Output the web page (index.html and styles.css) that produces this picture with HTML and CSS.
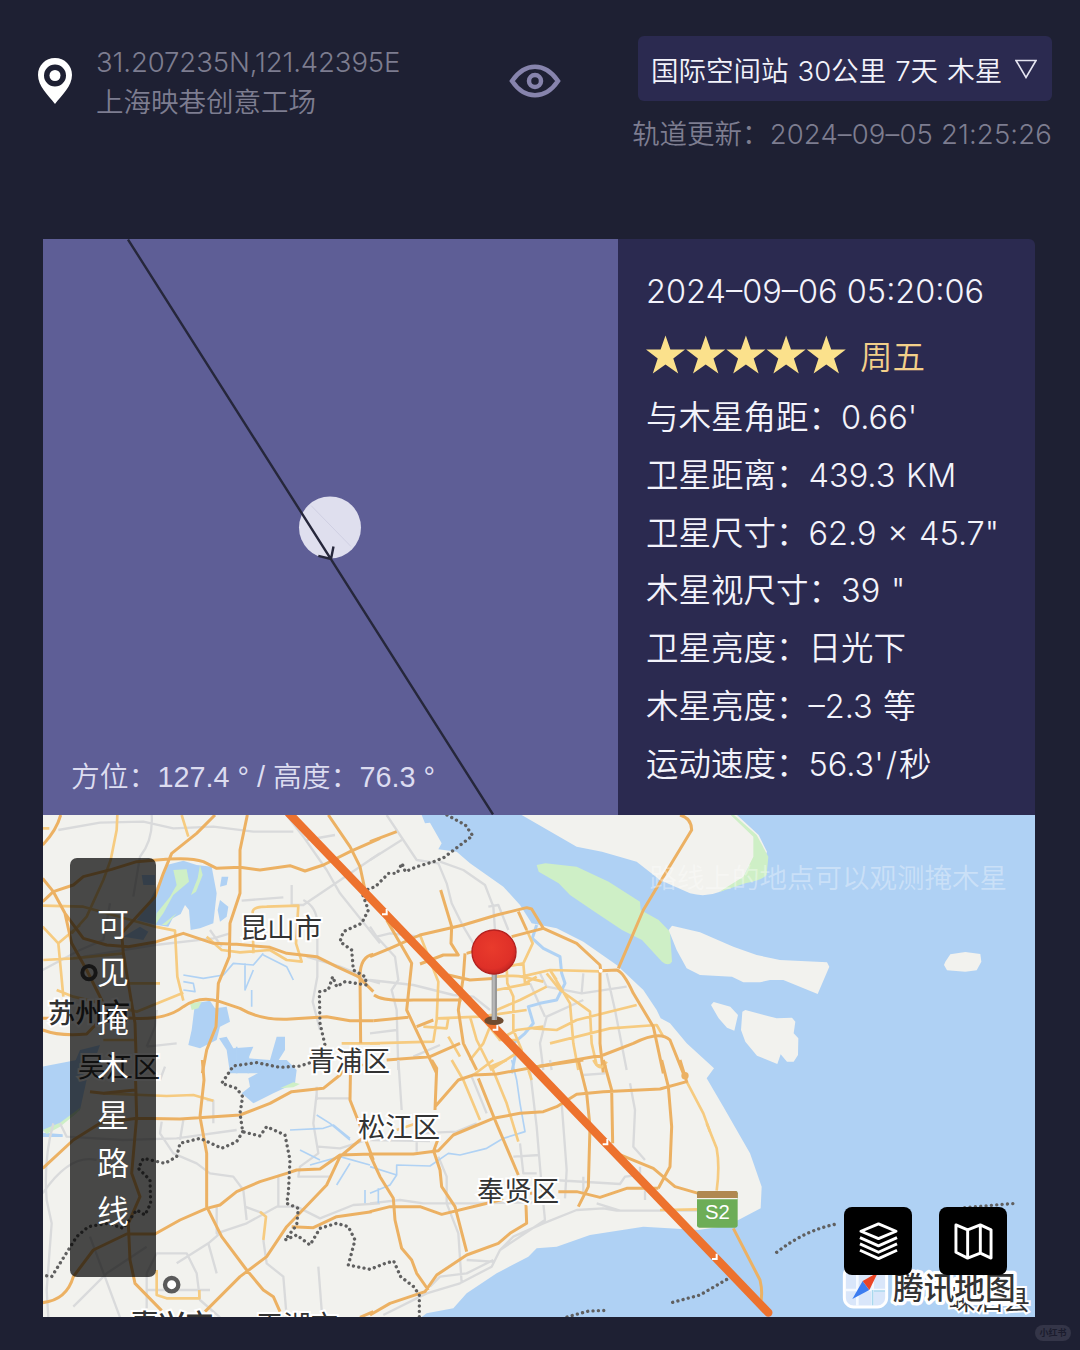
FILE: index.html
```html
<!DOCTYPE html>
<html lang="zh-CN">
  <head>
    <meta charset="UTF-8" />
    <meta name="viewport" content="width=device-width, initial-scale=1.0" />
    <title>掩木星预报</title>
    <link rel="stylesheet" href="styles.css" />
  </head>
  <body>
    <header class="header">
      <div class="location">
        <svg class="pin-icon" viewBox="0 0 36 48">
          <path fill-rule="evenodd" d="M18 1C8.400 1 1 8.500 1 18c0 11 10 20 17 29 7-9 17-18 17-29C35 8.500 27.600 1 18 1zm0 6.500a11 11 0 1 1 0 22 11 11 0 0 1 0-22z" />
          <circle cx="18" cy="18.500" r="5.500" />
        </svg>
        <div class="location-text">
          <div class="coords">31.207235N,121.42395E</div>
          <div class="place">上海映巷创意工场</div>
        </div>
      </div>
      <svg class="eye-icon" viewBox="0 0 52 38">
        <path d="M3 19C16 0 36 0 49 19 36 38 16 38 3 19z" />
        <circle cx="26" cy="19" r="6" />
      </svg>
      <div class="filter">
        <div class="filter-button">国际空间站 30公里 7天 木星 <svg viewBox="0 0 22 20"><path d="M1 1.500h20L11 18.500z" /></svg></div>
        <div class="updated">轨道更新：<span>2024–09–05 21:25:26</span></div>
      </div>
    </header>

    <main class="card">
      <section class="plot">
        <svg viewBox="0 0 575 575">
          <circle cx="287" cy="288" r="31" fill="#dfdfee" />
          <path d="M268 266L308 307" stroke="#cfcfe2" stroke-width="1" />
          <path class="transit" d="M85 0L450 575M275.300 316.300L288 319.500L290.500 307" />
        </svg>
        <div class="direction">方位：<span class="num">127.4 ° / </span>高度：<span class="num">76.3 °</span></div>
      </section>

      <section class="details">
        <div class="time">2024–09–06 05:20:06</div>
        <div class="rating">
          <svg viewBox="0 0 201 40">
            <defs>
              <path id="star" d="M19.500 0.500L24.400 14.600H39L27.300 23.600L32.200 38.500L19.500 29.500L6.800 38.500L11.700 23.600L0 14.600H14.600z" />
            </defs>
            <use href="#star" />
            <use href="#star" x="40.200" />
            <use href="#star" x="80.400" />
            <use href="#star" x="120.600" />
            <use href="#star" x="160.800" />
          </svg>
          <span>周五</span>
        </div>
        <div class="row">与木星角距：<span>0.66'</span></div>
        <div class="row">卫星距离：<span>439.3 KM</span></div>
        <div class="row">卫星尺寸：<span>62.9 × 45.7"</span></div>
        <div class="row">木星视尺寸：<span>39 "</span></div>
        <div class="row">卫星亮度：<span>日光下</span></div>
        <div class="row">木星亮度：<span>–2.3 等</span></div>
        <div class="row">运动速度：<span>56.3'<span class="slash">/</span>秒</span></div>
      </section>

      <section class="map">
        <svg class="map-canvas" viewBox="0 0 2979 1506" preserveAspectRatio="none">
          <!-- sea -->
          <path class="water" d="M1139 0L1149 25L1164 23L1199 85L1189 103L1244 110L1284 145L1384 215L1434 270L1469 325L1544 340L1624 380L1724 450L1804 525L1844 585L1856 610L1884 625L1934 685L2016 760L1994 790L2044 875L2124 1015L2159 1115L2156 1180L2089 1215L2034 1235L1969 1245L1804 1235L1644 1260L1544 1295L1484 1300L1459 1325L1364 1375L1274 1435L1234 1480L1154 1495L1139 1506H2979V0z" />
          <!-- islands -->
          <path class="land" d="M1439 0L1604 95L1680 110L1784 140L1854 195L1944 235Q1990 248 2034 230L2104 200L2160 150L2175 110L2150 60L2085 0z" />
          <path class="park" d="M2076 0L2144 60L2179 125L2174 180Q2160 195 2110 205L2030 232L2104 185L2134 125V65L2066 0z" />
          <path class="park" d="M1484 150L1510 145L1604 155L1700 200L1794 260L1796 285L1850 315L1884 350L1890 440Q1880 455 1860 440L1800 375L1740 345L1650 285L1584 240L1550 205L1490 170z" />
          <path class="land" d="M1880 345L1890 332L1974 352L2074 395L2144 420L2214 435L2355 442L2362 455L2327 537L2224 495H2184L2154 502H2104L2070 485L1974 480L1934 460L1904 405z" />
          <path class="land" d="M2007 570L2015 561L2065 575L2088 600L2077 647L2055 638L2030 610zM2110 585L2204 610L2250 608L2260 620L2255 655L2269 670L2268 720L2255 740L2235 740L2216 718L2206 747L2145 722L2110 680L2097 645L2101 590zM2710 440L2725 418L2770 411L2815 417L2818 440L2804 466L2770 470L2715 466L2706 450z" />

          <g transform="translate(-6 -15)">
            <path class="water" d="M380 165L430 152L470 165L515 170L530 250L520 340L480 355L452 360L447 300L435 285L422 312L398 325L385 350L350 345L290 330L320 290L350 230zM540 270L565 290L560 320L540 335L533 300zM545 200h20l-5 25l-20 5zM305 195h40v30h-35zM250 380L300 350L325 365L310 390zM465 580L510 572L525 595L560 590L570 635L540 650L530 690L480 715L445 705L455 660zM537 685L560 680L580 715L640 710L625 745L690 750L710 680L735 680L735 720L710 760L700 790H570L560 720zM120 720L180 705L150 790H90z" />
            <path class="park" d="M400 180L440 178L447 215L400 255L370 310L345 345L350 310L390 260L410 225zM480 165l8 30l-20 50l-15 10l20-50zM365 345l45-35l-30 35zM450 580l35-5l-10 20l-20 5z" />
            <path class="minor" d="M55 60L180 38L310 35L400 55L520 50L640 65H760M335 15Q340 90 300 140L280 260M740 15L790 80L860 180L900 250L1020 400M605 272L730 262M755 225V285H790L1020 130M790 270Q830 290 832 340V500L818 575L840 660M130 440L345 405L520 385L570 370M510 360L545 410M320 710L410 700M800 440L900 470L950 490M800 90L885 75M350 600L345 650L320 710M8 480L120 420L190 390L210 280M1020 520L950 500" />
            <path class="river" d="M430 495L490 505L550 495L580 460L640 465L670 430M430 515L460 520L465 545L430 540M615 460V540L640 480M670 435L740 470L760 510M635 540V590M590 710V790M625 730V790" />
            <path class="main" d="M232 15L230 60L212 150L190 210L140 320L95 370M425 15L445 80M8 287L130 290L345 350L405 362L412 500L430 572M8 350L55 400L70 560M55 400L120 345M10 450L100 445L250 430M640 430L638 305Q640 290 680 290L775 287L768 400L785 455L740 450L690 420L600 427L545 420L500 380M430 548L290 605L100 560L50 540M265 520H360M905 700H1020M8 55h20M190 690H290" />
            <path class="highway" d="M8 105Q50 60 62 15M8 275L40 245L100 225L130 200L215 178L290 155L350 150Q450 140 490 155L530 175L600 172L660 180L750 167L795 183L850 165L930 125L1020 85M8 205L40 245L75 310L130 385L200 405L265 410L350 395L430 370L520 400L590 403L690 412L740 430L830 440L890 470L955 500L985 530L1000 545M525 15L470 70L395 130L370 190L345 260L290 320L245 370L250 430L265 520L285 640L290 790M622 15L600 120V250L570 340L568 440L535 520L528 650L500 720L487 790M865 15L930 110L960 170L975 240M280 625Q380 630 430 590Q480 555 540 575L600 595Q660 630 740 628L860 620L930 632H1000M1000 433Q960 440 960 500L962 700M8 660Q60 680 140 672L190 620L280 625M8 625h50M75 310L95 400L140 480L200 600" />
          </g>

          <g transform="translate(-6 735)">
            <path class="water" d="M8 20L110 0L140 60L120 150L60 195L8 215zM8 218l60 5v8H8zM625 55L680 25L690 0H740L770 30L765 70L700 100L640 130L605 100L630 80z" />
            <path class="park" d="M8 210L60 188L125 140L110 160L60 200L20 222zM720 85l40-18l20 5l-20 10z" />
            <path class="minor" d="M40 190Q10 300 20 420L35 490L20 690L25 772M60 190L80 230L250 240L410 235L590 210M365 185L360 220L400 280L470 310L510 340L580 350L610 390L620 480M430 180L420 240M530 440V520L620 490L710 440H770L840 475L940 435L1020 430M615 440L670 460M830 100L820 190L835 280L780 320L775 350H870M830 115H930M830 80V120M715 350V440M670 540L680 610L730 650L740 772M835 620L845 750M320 640L350 580H440L470 640L480 720L540 772M100 740L200 640L320 560M410 610L505 550L540 520M505 550L530 640M150 530L240 772M8 400Q90 280 170 300M320 690H510M320 640V772M375 20L360 60M500 120L520 122V190M835 260L900 265L980 240" />
            <path class="river" d="M750 210L850 205L880 195L930 235M830 165L870 190L930 240M810 315L900 290L990 315M930 310L890 375M975 390V430M780 270L840 300" />
            <path class="main" d="M190 100L380 108L460 105L520 122M660 455L678 470L670 540M350 630V705L380 715H478V690M1000 15H960" />
            <path class="highway" d="M487 0L492 60L480 170L500 280V440L545 530L620 630L670 690L700 710L720 755M285 0L290 170L275 340L300 410L265 490L270 600L285 670L365 752M8 325L100 240L180 190L290 175L420 177L600 165L690 130L755 95L850 85L900 45L915 20M150 95L190 100L285 90M8 728Q80 720 100 650L160 570L260 522H345L420 480L500 445L540 435L590 395L660 365L740 340L770 330L840 327L900 285L995 282M495 755L600 650L680 590L740 500L860 375L900 290L960 240L1020 210M755 500L820 503L890 470L995 455M932 0L930 120L985 260L1000 300M960 772L1000 755" />
          </g>

          <g transform="translate(984 -15)">
            <path class="minor" d="M50 15L100 90L140 150L205 160L230 220L245 280L280 350L310 400L320 450M0 150L95 90M210 155L280 180L345 225L370 290L375 360M355 290L385 285L415 360M0 350L20 380L60 370L150 380M20 380L75 440L85 510L65 540L80 600L85 780M0 510L130 525L250 555L310 560L360 600M510 490L530 530L635 550L640 490M635 550L770 530M710 490L735 600L770 780M640 570L530 620L510 700L520 780M480 520L525 620M0 670L80 660M130 740L210 705" />
            <path class="river wide" d="M500 345L487 385L520 415L570 440L575 490L585 520L560 570L510 580L475 590L490 640L465 670L430 700L435 740L425 790" />
            <path class="main" d="M150 375L205 515L200 630L190 695L0 700M455 500L540 480L690 484M540 480L600 580L610 700L625 780M380 500Q440 495 455 500L520 515M530 530L450 570L380 600M470 360L488 400L460 460L465 520L500 500M460 460L410 470L412 520L430 560V660L455 720L360 780M530 490L570 540L660 605L665 700L680 765L710 770M490 655L560 660L620 630L800 585M540 700L720 655L860 645L880 680M200 625L330 620L470 600M385 690L440 660L520 650M380 600L340 700L300 750M235 680L270 740M160 650L230 655L235 625M300 620L320 690L365 780M540 480L560 510M380 540L480 520M350 640L390 690L440 690" />
            <path class="highway" d="M0 95L80 65M0 440L60 415L150 375L280 345L380 315L470 293L485 297L520 355M445 305L470 360M425 380L520 355L620 400L690 465L692 480M212 240L245 350L243 400L265 435H220L150 462M690 480V700L700 790M930 15Q965 25 965 60L880 200L820 300L745 475M695 482L740 480Q760 485 790 550L850 650L880 790M50 330L125 460L110 600L200 790M12 555Q40 575 130 570H275M290 430L325 420M285 430L280 500L265 600L280 700L320 780M235 495L300 510L380 505M10 632L115 622M140 650L190 630M500 770L700 735L790 700Q870 660 900 690L940 790M50 750L180 740L270 700" />
            <circle cx="692" cy="482" r="6" fill="#fff" />
          </g>

          <g transform="translate(984 735)">
            <path class="minor" d="M85 0L95 150M0 240L180 243M140 275V220L260 215L320 190M305 50L350 160M480 30L500 200L515 380L525 480L390 570L365 620L270 670L170 700L40 765M575 130L590 330L585 415M430 290L510 285M450 250L460 340H500M0 430L90 420L160 430H330L560 425M205 290L230 350V430L265 520L275 670M550 360L750 372L765 350L810 345V320M640 350V400M640 45L705 40M780 70L795 150L790 260L825 300M540 0L545 30M825 370V420M520 490L620 450L700 445L740 452H985M680 430L750 452M290 600L370 605M180 680L210 650L290 640L370 600M390 570L430 530L520 490" />
            <path class="river" d="M425 0L440 60L450 130L465 215L400 235L350 265L270 285L235 280L180 318L80 315V345L0 320M80 345L60 375L0 400M25 385V430" />
            <path class="main" d="M245 0L280 60L330 180M365 20L410 130L445 245M310 45L370 0M360 20L410 0M475 30L485 60M950 65L1000 160L1020 215M870 450L985 448M670 0Q690 40 710 5M80 210L140 190" />
            <path class="highway" d="M185 0L200 25L195 150M205 235L190 275M195 140L265 60L310 45L380 42L500 20L640 0M325 55L375 180L445 345M0 282H130L205 272L250 225L370 175L450 160L520 155L560 140L620 103L700 95L870 87L950 65L930 0M0 285L30 350L70 415L75 480L95 565L125 600L140 640L175 690M0 455L60 440H150L215 463L330 435L400 418M480 400H500M190 270L210 330L215 380L255 440L290 575M0 765L60 730L165 695L200 645L290 585L385 550L420 520L470 490L468 435M625 0L650 100L660 200L655 380L625 440M700 0L725 90L728 250M875 0L895 80L905 200L900 320L865 385M740 280L850 325L915 380L985 400M565 395H620L690 412L770 385H865" />
            <circle cx="945" cy="47" r="11" fill="#ecb163" />
          </g>

          <g transform="translate(1974 735)">
            <path class="main" d="M20 190L50 265Q60 320 50 392" />
            <path class="highway" d="M100 505L180 660Q190 700 180 740" />
          </g>

          <!-- district borders -->
          <path class="border" d="M1215 0L1270 30L1292 62L1205 128L1175 140L1125 155L1090 170L1080 145L1065 175L1040 175L1000 215L959 230L979 285L959 325L904 350L894 380L929 405L934 465L969 485L974 510L909 500L884 515L872 485L859 525L832 530L834 625L849 690L830 735L774 753L714 757L644 743L574 753L539 805L584 820L602 845L594 895L602 950L654 963L674 935L729 960L744 1035L739 1135L734 1165L769 1180L764 1230L729 1275L764 1260L804 1290L834 1240L884 1225L919 1235L939 1275L919 1350L984 1363L1030 1345L1055 1338L1076 1385L1115 1415L1132 1440V1506M602 950L584 980L539 1000L474 970L414 985L404 1025L369 1045L304 1030L289 1060L324 1095L326 1165L309 1200L284 1185L244 1240L199 1225L139 1235L104 1265L29 1385L0 1380" />
          <path class="border" d="M1575 1506L1640 1488L1700 1486M1892 1462L1974 1440L2060 1390M2204 1312Q2290 1245 2384 1227M2768 1178L2920 1165" />

          <circle cx="141" cy="473" r="20" fill="none" stroke="#4c4c4c" stroke-width="12" />
          <circle cx="389" cy="1409" r="20" fill="#fff" stroke="#5a5a5a" stroke-width="13" />
          <g class="labels">
            <text x="717" y="339">昆山市</text>
            <text x="921" y="738">青浦区</text>
            <text x="1071" y="936">松江区</text>
            <text x="1428" y="1128">奉贤区</text>
            <text x="141" y="594" class="city">苏州市</text>
            <text x="231" y="756">吴江区</text>
            <text x="390" y="1528" class="city">嘉兴市</text>
            <text x="765" y="1530">平湖市</text>
            <text x="2841" y="1455">嵊泗县</text>
          </g>

          <!-- S2 expressway badge -->
          <rect x="1965" y="1128" width="122" height="110" rx="7" fill="#6dad57" />
          <path d="M1965 1150v-15q0-7 7-7h108q7 0 7 7v15z" fill="#b08850" />
          <path d="M1965 1151h122" stroke="#f4f4ec" stroke-width="4" />
          <text class="badge" x="2026" y="1213">S2</text>

          <!-- visibility track -->
          <path class="track" d="M740-6L2179 1493" />
          <path class="arrow" d="M1020 298h14v-16M1352 644h14v-16M1682 988h14v-16M2010 1332h14v-16" />

          <!-- observer pin -->
          <ellipse cx="1356" cy="617" rx="29" ry="13" fill="#6f4c30" />
          <path d="M1357 470V615" stroke="#999" stroke-width="16" />
          <path d="M1355 470V615" stroke="#b8b8b8" stroke-width="7" />
          <circle cx="1356" cy="411" r="66" fill="url(#pinhead)" stroke="#b3211f" stroke-width="4" />
          <defs>
            <radialGradient id="pinhead" cx=".45" cy=".4" r=".6">
              <stop offset="0" stop-color="#e93b2c" />
              <stop offset=".8" stop-color="#df3028" />
              <stop offset="1" stop-color="#c52622" />
            </radialGradient>
          </defs>

          <!-- map provider -->
          <rect x="2407" y="1352" width="127" height="124" rx="28" fill="#d9e6fa" stroke="#fff" stroke-width="9" />
          <path d="M2412 1425h117M2446 1356v116M2492 1356v116" stroke="#f5f9ff" stroke-width="8" />
          <path d="M2492 1425v46M2496 1428h33" stroke="#a9d8ee" stroke-width="5" />
          <path d="M2431 1452L2462 1398L2482 1425z" fill="#3c7cf0" />
          <path d="M2462 1398L2508 1372L2482 1425z" fill="#ea4526" />
          <text class="provider" x="2737" y="1417">腾讯地图</text>
        </svg>

        <div class="side-title">
          <span>可</span><span>见</span><span>掩</span><span>木</span><span>星</span><span>路</span><span>线</span>
        </div>
        <div class="hint">路线上的地点可以观测掩木星</div>
        <div class="map-tools">
          <div class="tool">
            <svg viewBox="0 0 40 40">
              <path d="M20 2L38 9.500L20 17L2 9.500z" />
              <path d="M1 16L20 24.500L39 16M1 22.500L20 31L39 22.500M1 29L20 37.500L39 29" />
            </svg>
          </div>
          <div class="tool">
            <svg viewBox="0 0 40 40">
              <path d="M2 3L14 8L27 3L38 8V37L27 32L14 37L2 31zM14 8V37M27 3V32" />
            </svg>
          </div>
        </div>
      </section>
    </main>

    <div class="watermark">小红书</div>
  </body>
</html>
```
FILE: styles.css
```css
* {
  box-sizing: border-box;
}
body {
  position: relative;
  margin: 0;
  width: 1080px;
  height: 1350px;
  overflow: hidden;
  background: #1e2033;
  color: #f3f3fb;
  font-family: Inter, "Noto Sans CJK SC", sans-serif;
  font-weight: 350;
}
svg {
  display: block;
}
.header {
  display: flex;
  justify-content: space-between;
  height: 239px;
  padding: 36px 28px 0 37px;
}
.location {
  display: flex;
  gap: 23px;
  width: 410px;
}
.pin-icon {
  width: 36px;
  height: 48px;
  margin-top: 21px;
  fill: #fff;
}
.location-text {
  padding-top: 6px;
  font-size: 27.5px;
  line-height: 40px;
  color: #7d7d90;
  white-space: nowrap;
}
.coords {
  letter-spacing: -0.1px;
}
.eye-icon {
  width: 52px;
  height: 38px;
  margin-top: 26px;
  fill: none;
  stroke: #8784ad;
  stroke-width: 4.5;
}
.filter {
  display: flex;
  flex-direction: column;
  align-items: flex-end;
  width: 430px;
  white-space: nowrap;
}
.filter-button {
  display: flex;
  align-items: center;
  justify-content: space-between;
  width: 414px;
  height: 65px;
  padding: 0 15px 0 13px;
  border-radius: 6px;
  background: #2b2a50;
  font-size: 27.5px;
  word-spacing: 1.3px;
}
.filter-button svg {
  width: 22px;
  height: 20px;
  fill: none;
  stroke: #e4e4f0;
  stroke-width: 1.6;
}
.updated {
  margin-top: 13px;
  font-size: 27.5px;
  line-height: 40px;
  color: #7d7d90;
}
.updated span {
  letter-spacing: 0.15px;
}
.card {
  display: grid;
  grid-template-columns: 575px 417px;
  grid-template-rows: 576px 502px;
  width: 992px;
  margin-left: 43px;
  border-radius: 0 6px 0 0;
  overflow: hidden;
}
.plot {
  position: relative;
  background: #5e5e96;
}
.plot svg {
  width: 575px;
  height: 576px;
}
.transit {
  fill: none;
  stroke: #26273b;
  stroke-width: 2.4;
}
.direction {
  position: absolute;
  left: 28px;
  bottom: 18px;
  font-size: 28.8px;
  line-height: 40px;
  color: #dcdcf0;
  white-space: pre;
}
.num {
  font-family: "Liberation Sans", sans-serif;
}
.details {
  padding: 23px 0 0 28px;
  background: #2b2a50;
  font-size: 32.5px;
  white-space: nowrap;
}
.time {
  height: 60px;
  line-height: 60px;
}
.rating {
  display: flex;
  align-items: center;
  gap: 13px;
  height: 67px;
  color: #f3d08a;
}
.rating svg {
  width: 201px;
  height: 40px;
  margin-top: -2px;
  fill: #fbe18c;
}
.rating span {
  margin-top: -2px;
}
.row {
  height: 57.8px;
  line-height: 57.8px;
  word-spacing: 1.5px;
}
.slash {
  margin: 0 2px;
}
.map {
  position: relative;
  grid-column: 1 / 3;
  background: #f2f2ee;
  overflow: hidden;
}
.map-canvas {
  width: 993px;
  height: 502px;
  margin-left: -1px;
}
.water {
  fill: #afd1f4;
}
.land {
  fill: #f2f2ee;
}
.park {
  fill: #ceefc6;
}
.minor,
.main,
.highway,
.river {
  fill: none;
  stroke-linejoin: round;
}
.minor {
  stroke: #d9dadb;
  stroke-width: 7;
}
.river {
  stroke: #b0d2f4;
  stroke-width: 5;
}
.wide {
  stroke-width: 9;
}
.main {
  stroke: #f6cb80;
  stroke-width: 8;
}
.highway {
  stroke: #ecb163;
  stroke-width: 9;
}
.border {
  fill: none;
  stroke: #606060;
  stroke-width: 10;
  stroke-linecap: round;
  stroke-dasharray: 0.1 16;
}
.labels text {
  font-size: 82px;
  font-weight: 400;
  fill: #333;
  stroke: #fff;
  stroke-width: 12;
  paint-order: stroke;
  text-anchor: middle;
  dominant-baseline: central;
}
.labels .city {
  font-weight: 500;
}
.badge {
  font-family: "Liberation Sans", sans-serif;
  font-size: 61px;
  font-weight: 400;
  fill: #fff;
  text-anchor: middle;
}
.track {
  stroke: #ed722e;
  stroke-width: 25;
  stroke-linecap: round;
}
.arrow {
  fill: none;
  stroke: #fff;
  stroke-width: 6;
}
.provider {
  font-size: 92px;
  font-weight: 500;
  fill: #333;
  stroke: #fff;
  stroke-width: 20;
  stroke-linejoin: round;
  paint-order: stroke;
  text-anchor: middle;
  dominant-baseline: central;
}
.side-title {
  position: absolute;
  top: 43px;
  left: 27px;
  display: flex;
  flex-direction: column;
  align-items: center;
  width: 86px;
  height: 419px;
  padding-top: 43px;
  border-radius: 7px;
  background: rgba(0, 0, 0, 0.7);
  font-size: 32px;
  line-height: 47.8px;
  color: #fff;
}
.hint {
  position: absolute;
  top: 43px;
  right: 28px;
  font-size: 27.5px;
  line-height: 40px;
  color: rgba(255, 255, 255, 0.35);
}
.map-tools {
  position: absolute;
  top: 392px;
  right: 28px;
  display: flex;
  gap: 27px;
}
.tool {
  display: flex;
  align-items: center;
  justify-content: center;
  width: 68px;
  height: 68px;
  border-radius: 8px;
  background: #000;
}
.tool svg {
  width: 41px;
  height: 39px;
  fill: none;
  stroke: #fff;
  stroke-width: 3;
  stroke-linejoin: round;
}
.watermark {
  position: absolute;
  right: 9px;
  bottom: 9px;
  width: 36px;
  height: 16px;
  border-radius: 8px;
  background: #343548;
  font-size: 9px;
  font-weight: 700;
  line-height: 16px;
  text-align: center;
  color: #1b1c2d;
}
```
